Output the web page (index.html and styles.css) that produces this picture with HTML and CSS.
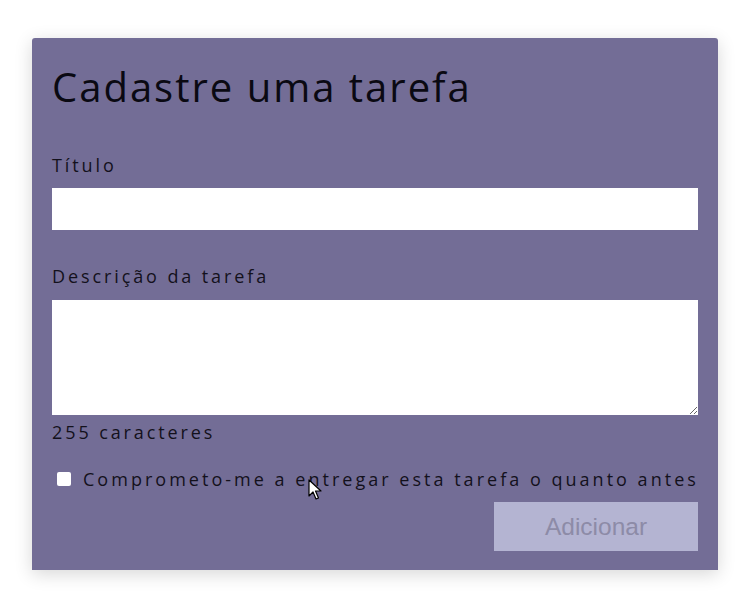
FILE: index.html
```html
<!DOCTYPE html>
<html lang="pt-BR">
<head>
<meta charset="utf-8">
<title>Cadastre uma tarefa</title>
<link rel="stylesheet" href="styles.css">
</head>
<body>
<form class="card">
  <h1 class="title">Cadastre uma tarefa</h1>
  <label class="label label-first" for="titulo">Título</label>
  <input class="field" id="titulo" type="text">
  <label class="label label-next" for="descricao">Descrição da tarefa</label>
  <textarea class="area" id="descricao"></textarea>
  <div class="counter">255 caracteres</div>
  <label class="check-row">
    <input class="check" type="checkbox">
    <span>Comprometo-me a entregar esta tarefa o quanto antes</span>
  </label>
  <div class="actions">
    <button class="btn" type="button" disabled>Adicionar</button>
  </div>
</form>
<svg class="cursor" width="14" height="22" viewBox="0 0 14 22"><path d="M1 1 L1 17 L5 13 L8 20 L10.5 19 L7.5 12 L13 12 Z" fill="#fff" stroke="#000" stroke-width="1.2" stroke-linejoin="round"/></svg>
</body>
</html>
```
FILE: styles.css
```css
html, body {
  margin: 0;
  padding: 0;
  background: #ffffff;
}
body {
  font-family: "Open Sans", "DejaVu Sans", sans-serif;
  position: relative;
  min-height: 597px;
}
.card {
  box-sizing: border-box;
  width: 686px;
  margin: 38px 0 0 32px;
  padding: 22px 20px 19px 20px;
  background: #736d96;
  border-radius: 3px 3px 0 0;
  box-shadow: 0 4px 18px rgba(0, 0, 0, 0.16);
  display: flex;
  flex-direction: column;
  color: #13111c;
}
.title {
  margin: 0;
  font-size: 40px;
  font-weight: 400;
  line-height: 54px;
  letter-spacing: 2px;
  color: #0a0912;
}
.label {
  display: block;
  font-size: 18px;
  line-height: 24px;
  letter-spacing: 2.9px;
}
.label-first { margin-top: 39px; margin-bottom: 11px; }
.label-next { margin-top: 34px; margin-bottom: 12px; }
.field {
  box-sizing: border-box;
  height: 42px;
  width: 100%;
  border: 0;
  margin: 0;
  background: #ffffff;
  outline: none;
}
.area {
  box-sizing: border-box;
  display: block;
  height: 115px;
  width: 100%;
  border: 0;
  margin: 0;
  background: #ffffff;
  resize: vertical;
  outline: none;
}
.counter {
  margin-top: 5px;
  font-size: 18px;
  line-height: 24px;
  letter-spacing: 2.9px;
}
.check-row {
  margin-top: 23px;
  display: flex;
  align-items: center;
  font-size: 18px;
  line-height: 24px;
  letter-spacing: 3.02px;
  white-space: nowrap;
}
.check {
  appearance: none;
  -webkit-appearance: none;
  width: 14px;
  height: 14px;
  margin: 0 12px 0 5px;
  background: #ffffff;
  border-radius: 2px;
  flex: none;
}
.actions {
  margin-top: 11px;
  display: flex;
  justify-content: flex-end;
}
.btn {
  width: 204px;
  height: 49px;
  border: 0;
  background: #b4b4d2;
  color: #8d8ba7;
  font-family: "Liberation Sans", Arial, sans-serif;
  font-size: 24.5px;
  padding: 0;
}
.cursor {
  position: absolute;
  left: 308px;
  top: 479px;
}
```
